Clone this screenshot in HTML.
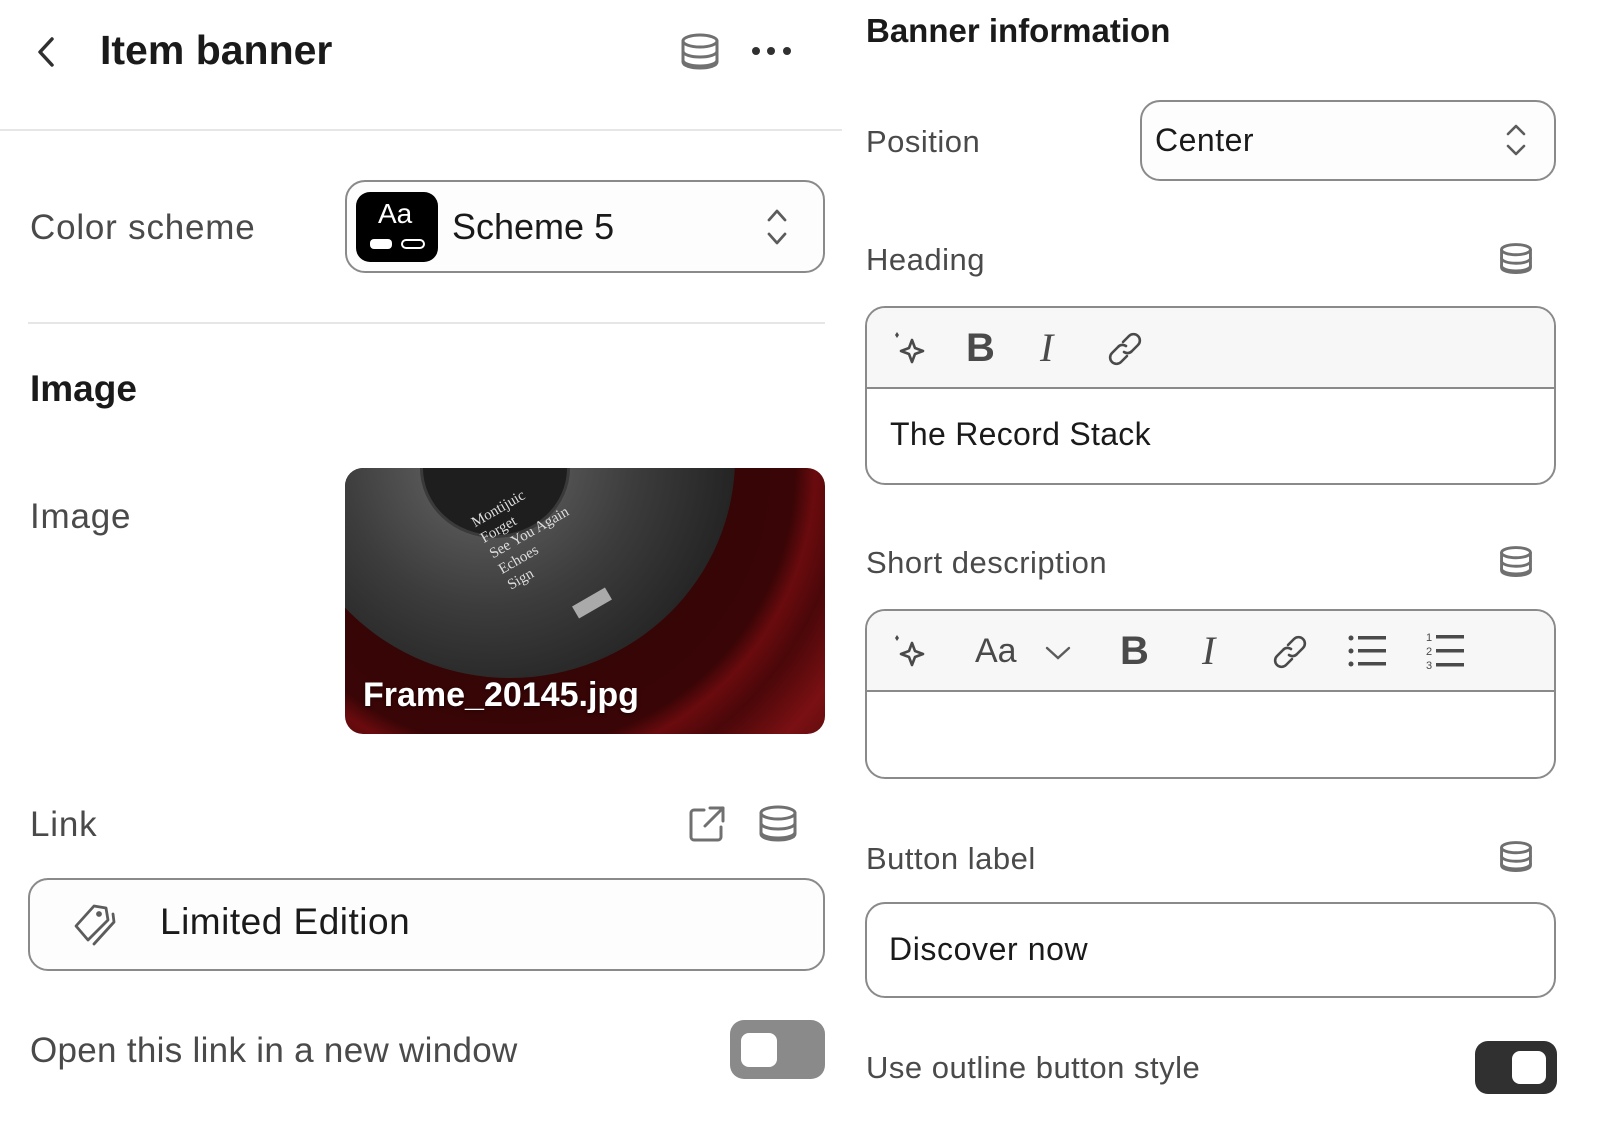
<!DOCTYPE html>
<html><head><meta charset="utf-8">
<style>
*{box-sizing:border-box;margin:0;padding:0}
body{width:1600px;height:1132px;background:#fff;position:relative;overflow:hidden;font-family:"Liberation Sans",sans-serif;color:#303030}
.a{position:absolute;white-space:nowrap}
.lbl{font-size:35px;color:#4a4a4a;line-height:1;letter-spacing:0.8px}
.rl{font-size:31px;color:#4a4a4a;line-height:1;letter-spacing:0.5px}
.box{position:absolute;border:2px solid #8a8a8a;border-radius:20px;background:#fdfdfd}
svg{position:absolute;overflow:visible}
.ic{fill:none;stroke:#5c5c5c;stroke-width:2.4;stroke-linecap:round;stroke-linejoin:round}
</style></head><body>

<svg style="left:36px;top:36px" width="20" height="32" viewBox="0 0 20 32"><path d="M16 3 L4 16 L16 29" fill="none" stroke="#303030" stroke-width="3.5" stroke-linecap="round" stroke-linejoin="round"/></svg>
<div class="a" style="left:100px;top:28px;font-size:41px;font-weight:bold;color:#1a1a1a;line-height:1.1">Item banner</div>
<svg style="left:680px;top:32px" width="40" height="40" viewBox="0 0 40 40"><g class="ic" style="stroke:#707070;stroke-width:3"><ellipse cx="20" cy="9" rx="17" ry="6"/><path d="M3 9v21c0 3.5 7.5 6 17 6s17-2.5 17-6V9"/><path d="M3 19c0 3.5 7.5 6 17 6s17-2.5 17-6"/><path d="M3 28c0 3.5 7.5 6 17 6s17-2.5 17-6"/></g></svg>
<div class="a" style="left:752px;top:47px;width:8px;height:8px;border-radius:50%;background:#303030"></div>
<div class="a" style="left:767px;top:47px;width:8px;height:8px;border-radius:50%;background:#303030"></div>
<div class="a" style="left:783px;top:47px;width:8px;height:8px;border-radius:50%;background:#303030"></div>
<div class="a" style="left:0;top:129px;width:842px;height:2px;background:#e6e6e6"></div>

<div class="a lbl" style="left:30px;top:210px">Color scheme</div>
<div class="box" style="left:345px;top:180px;width:480px;height:93px"></div>
<div class="a" style="left:356px;top:192px;width:82px;height:70px;background:#000;border-radius:14px"></div>
<div class="a" style="left:378px;top:200px;color:#fff;font-size:28px;line-height:1">Aa</div>
<div class="a" style="left:370px;top:239px;width:22px;height:10px;background:#fff;border-radius:4px"></div>
<div class="a" style="left:401px;top:239px;width:24px;height:10px;border:2.5px solid #fff;border-radius:5px"></div>
<div class="a" style="left:452px;top:209px;font-size:36px;color:#1a1a1a;line-height:1">Scheme 5</div>
<svg style="left:765px;top:207px" width="24" height="40" viewBox="0 0 24 40"><path d="M4 13 L12 4 L20 13 M4 27 L12 36 L20 27" fill="none" stroke="#5c5c5c" stroke-width="2.8" stroke-linecap="round" stroke-linejoin="round"/></svg>
<div class="a" style="left:28px;top:322px;width:797px;height:2px;background:#e6e6e6"></div>

<div class="a" style="left:30px;top:370px;font-size:37px;font-weight:bold;color:#1a1a1a;line-height:1">Image</div>
<div class="a lbl" style="left:30px;top:499px">Image</div>
<div class="a" style="left:345px;top:468px;width:480px;height:266px;border-radius:18px;overflow:hidden;background:radial-gradient(circle at 170px 0px,#2a0405 0,#3a0506 280px,#6a0b0e 300px,#4a0709 330px,#7a1013 380px,#320405 470px,#3a0506 560px)">
  <div class="a" style="left:-60px;top:-230px;width:450px;height:440px;border-radius:50%;background:radial-gradient(circle at 45% 50%,#6a6a6a 0,#3c3c3c 45%,#1c1c1c 85%,#111 100%)"></div>
  <div class="a" style="left:75px;top:-70px;width:150px;height:140px;border-radius:50%;background:#1e1e1e;border:3px solid #3a3a3a"></div>
  <div class="a" style="left:140px;top:20px;color:#ddd;font-family:'Liberation Serif',serif;font-size:15px;line-height:18px;transform:rotate(-30deg)">Montijuic<br>Forget<br>See You Again<br>Echoes<br>Sign</div>
  <div class="a" style="left:228px;top:128px;width:38px;height:14px;background:#aaa;transform:rotate(-30deg)"></div>
  <div class="a" style="left:18px;top:210px;color:#fff;font-size:34px;font-weight:bold;line-height:1;text-shadow:0 1px 3px rgba(0,0,0,.6)">Frame_20145.jpg</div>
</div>

<div class="a lbl" style="left:30px;top:807px">Link</div>
<svg style="left:688px;top:805px" width="38" height="38" viewBox="0 0 38 38"><g class="ic" style="stroke:#707070;stroke-width:3"><path d="M16 5H6a3 3 0 0 0-3 3v24a3 3 0 0 0 3 3h24a3 3 0 0 0 3-3V22"/><path d="M22 3h13v13M35 3 17 21"/></g></svg>
<svg style="left:758px;top:804px" width="40" height="40" viewBox="0 0 40 40"><g class="ic" style="stroke:#707070;stroke-width:3"><ellipse cx="20" cy="9" rx="17" ry="6"/><path d="M3 9v21c0 3.5 7.5 6 17 6s17-2.5 17-6V9"/><path d="M3 19c0 3.5 7.5 6 17 6s17-2.5 17-6"/><path d="M3 28c0 3.5 7.5 6 17 6s17-2.5 17-6"/></g></svg>
<div class="box" style="left:28px;top:878px;width:797px;height:93px"></div>
<svg style="left:72px;top:902px" width="46" height="44" viewBox="0 0 46 44"><g class="ic" style="stroke:#5c5c5c;stroke-width:2.8"><path d="M4 24 L22 4 L34 6 L36 18 L16 38 Z"/><circle cx="27" cy="12" r="1.5"/><path d="M41 12 L42 20 L22 42"/></g></svg>
<div class="a" style="left:160px;top:903px;font-size:37px;color:#1a1a1a;line-height:1;letter-spacing:0.5px">Limited Edition</div>

<div class="a lbl" style="left:30px;top:1033px;font-size:35px;letter-spacing:0.3px">Open this link in a new window</div>
<div class="a" style="left:730px;top:1020px;width:95px;height:59px;background:#8a8a8a;border-radius:14px"></div>
<div class="a" style="left:741px;top:1033px;width:36px;height:34px;background:#fff;border-radius:8px"></div>

<div class="a" style="left:866px;top:14px;font-size:33px;font-weight:bold;color:#1a1a1a;line-height:1">Banner information</div>
<div class="a rl" style="left:866px;top:126px">Position</div>
<div class="box" style="left:1140px;top:100px;width:416px;height:81px"></div>
<div class="a" style="left:1155px;top:124px;font-size:32px;color:#1a1a1a;line-height:1;letter-spacing:0.5px">Center</div>
<svg style="left:1504px;top:122px" width="24" height="36" viewBox="0 0 24 36"><path d="M4 12 L12 4 L20 12 M4 24 L12 32 L20 24" fill="none" stroke="#5c5c5c" stroke-width="2.6" stroke-linecap="round" stroke-linejoin="round"/></svg>

<div class="a rl" style="left:866px;top:244px">Heading</div>
<svg style="left:1499px;top:242px" width="34" height="34" viewBox="0 0 40 40"><g class="ic" style="stroke:#707070;stroke-width:3.4"><ellipse cx="20" cy="9" rx="17" ry="6"/><path d="M3 9v21c0 3.5 7.5 6 17 6s17-2.5 17-6V9"/><path d="M3 19c0 3.5 7.5 6 17 6s17-2.5 17-6"/><path d="M3 28c0 3.5 7.5 6 17 6s17-2.5 17-6"/></g></svg>
<div class="box" style="left:865px;top:306px;width:691px;height:179px;background:#fff;overflow:hidden">
  <div style="height:81px;background:#f7f7f7;border-bottom:2px solid #8a8a8a"></div>
</div>
<div class="a" style="left:890px;top:418px;font-size:32px;color:#1a1a1a;line-height:1;letter-spacing:0.3px">The Record Stack</div>

<div class="a rl" style="left:866px;top:547px">Short description</div>
<svg style="left:1499px;top:545px" width="34" height="34" viewBox="0 0 40 40"><g class="ic" style="stroke:#707070;stroke-width:3.4"><ellipse cx="20" cy="9" rx="17" ry="6"/><path d="M3 9v21c0 3.5 7.5 6 17 6s17-2.5 17-6V9"/><path d="M3 19c0 3.5 7.5 6 17 6s17-2.5 17-6"/><path d="M3 28c0 3.5 7.5 6 17 6s17-2.5 17-6"/></g></svg>
<div class="box" style="left:865px;top:609px;width:691px;height:170px;background:#fff;overflow:hidden">
  <div style="height:81px;background:#f7f7f7;border-bottom:2px solid #8a8a8a"></div>
</div>

<svg style="left:892px;top:330px" width="36" height="36" viewBox="0 0 36 36"><path d="M5 2 L7 5 L5 8 L3 5Z" fill="#4a4a4a"/><path d="M20 10 L23 18 L31 21 L23 24 L20 32 L17 24 L9 21 L17 18 Z" fill="none" stroke="#4a4a4a" stroke-width="2.6" stroke-linejoin="round"/></svg>
<div class="a" style="left:966px;top:328px;font-size:40px;font-weight:bold;color:#4a4a4a;line-height:1">B</div>
<div class="a" style="left:1040px;top:328px;font-size:40px;font-family:'Liberation Serif',serif;font-style:italic;color:#4a4a4a;line-height:1">I</div>
<svg style="left:1106px;top:330px" width="38" height="38" viewBox="0 0 38 38"><g class="ic" style="stroke:#4a4a4a;stroke-width:2.6"><path d="M17 12 L23 6 a6 6 0 0 1 9 9 L26 21 a6 6 0 0 1-8 1"/><path d="M21 26 L15 32 a6 6 0 0 1-9-9 L12 17 a6 6 0 0 1 8-1"/></g></svg>

<svg style="left:892px;top:633px" width="36" height="36" viewBox="0 0 36 36"><path d="M5 2 L7 5 L5 8 L3 5Z" fill="#4a4a4a"/><path d="M20 10 L23 18 L31 21 L23 24 L20 32 L17 24 L9 21 L17 18 Z" fill="none" stroke="#4a4a4a" stroke-width="2.6" stroke-linejoin="round"/></svg>
<div class="a" style="left:975px;top:634px;font-size:34px;color:#4a4a4a;line-height:1">Aa</div>
<svg style="left:1045px;top:645px" width="26" height="16" viewBox="0 0 26 16"><path d="M2 3 L13 13 L24 3" fill="none" stroke="#5c5c5c" stroke-width="2.4" stroke-linecap="round"/></svg>
<div class="a" style="left:1120px;top:631px;font-size:40px;font-weight:bold;color:#4a4a4a;line-height:1">B</div>
<div class="a" style="left:1202px;top:631px;font-size:40px;font-family:'Liberation Serif',serif;font-style:italic;color:#4a4a4a;line-height:1">I</div>
<svg style="left:1271px;top:633px" width="38" height="38" viewBox="0 0 38 38"><g class="ic" style="stroke:#4a4a4a;stroke-width:2.6"><path d="M17 12 L23 6 a6 6 0 0 1 9 9 L26 21 a6 6 0 0 1-8 1"/><path d="M21 26 L15 32 a6 6 0 0 1-9-9 L12 17 a6 6 0 0 1 8-1"/></g></svg>
<svg style="left:1348px;top:634px" width="40" height="34" viewBox="0 0 40 34"><g fill="#4a4a4a"><circle cx="3" cy="4" r="2.5"/><circle cx="3" cy="17" r="2.5"/><circle cx="3" cy="30" r="2.5"/><rect x="10" y="2" width="28" height="3.5"/><rect x="10" y="15" width="28" height="3.5"/><rect x="10" y="28" width="28" height="3.5"/></g></svg>
<svg style="left:1426px;top:630px" width="40" height="42" viewBox="0 0 40 42"><g fill="#4a4a4a"><rect x="10" y="5" width="28" height="3.5"/><rect x="10" y="19" width="28" height="3.5"/><rect x="10" y="33" width="28" height="3.5"/></g><text x="0" y="11" font-size="11" fill="#4a4a4a" font-family="Liberation Sans">1</text><text x="0" y="25" font-size="11" fill="#4a4a4a" font-family="Liberation Sans">2</text><text x="0" y="39" font-size="11" fill="#4a4a4a" font-family="Liberation Sans">3</text></svg>

<div class="a rl" style="left:866px;top:843px">Button label</div>
<svg style="left:1499px;top:840px" width="34" height="34" viewBox="0 0 40 40"><g class="ic" style="stroke:#707070;stroke-width:3.4"><ellipse cx="20" cy="9" rx="17" ry="6"/><path d="M3 9v21c0 3.5 7.5 6 17 6s17-2.5 17-6V9"/><path d="M3 19c0 3.5 7.5 6 17 6s17-2.5 17-6"/><path d="M3 28c0 3.5 7.5 6 17 6s17-2.5 17-6"/></g></svg>
<div class="box" style="left:865px;top:902px;width:691px;height:96px;background:#fff"></div>
<div class="a" style="left:889px;top:933px;font-size:32px;color:#1a1a1a;line-height:1;letter-spacing:0.6px">Discover now</div>

<div class="a rl" style="left:866px;top:1052px">Use outline button style</div>
<div class="a" style="left:1475px;top:1041px;width:82px;height:53px;background:#303030;border-radius:13px"></div>
<div class="a" style="left:1512px;top:1051px;width:34px;height:33px;background:#fff;border-radius:8px"></div>
</body></html>
